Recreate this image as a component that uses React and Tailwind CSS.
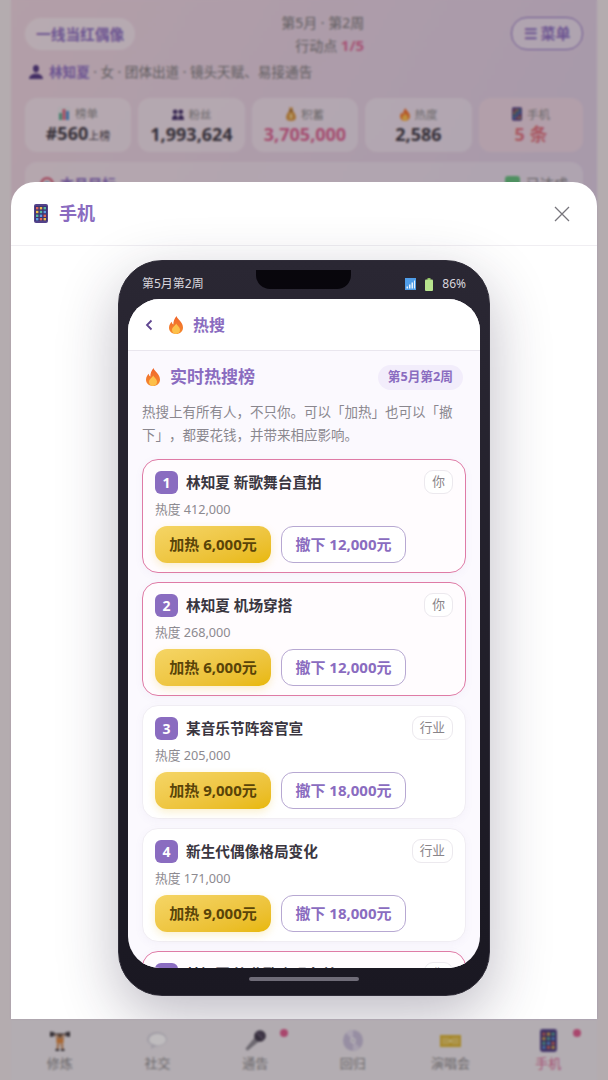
import React from 'react';

const Flame = ({ w = 14, h = 18 }) => (
  <svg width={w} height={h} viewBox="0 0 14 18" className="shrink-0">
    <defs>
      <linearGradient id="flameOuter" x1="0" y1="0" x2="0" y2="1">
        <stop offset="0" stopColor="#f0652a" />
        <stop offset="1" stopColor="#f58a2e" />
      </linearGradient>
    </defs>
    <path d="M7.500 0C8 3 14 6 14 11.500 14 15.500 11 18 7 18S0 15.500 0 11.800C0 9 1.500 7 2.800 5.800c.1 1.400.6 2.300 1.500 2.800C4.200 5.500 5.500 2.500 7.500 0z" fill="url(#flameOuter)" />
    <path d="M7.300 7.500c.4 1.800 3.700 3.400 3.700 6.300 0 2.300-1.700 4.200-4 4.200s-4-1.800-4-4c0-2.900 3.300-4.200 4.300-6.500z" fill="#fcc04a" />
  </svg>
);

const PhoneIcon = ({ w = 14, h = 19 }) => (
  <svg width={w} height={h} viewBox="0 0 14 19" className="shrink-0">
    <rect width="14" height="19" rx="2" fill="#53428a" />
    <rect x="1.200" y="2" width="11.600" height="15" fill="#3c3370" />
    {[2, 5.800, 9.600].map((x, i) =>
      [3, 6.800, 10.600, 14].map((y, j) => (
        <rect key={`${i}-${j}`} x={x} y={y} width="2.400" height="2.400" fill={['#e0685a', '#f0bc48', '#55b8a0', '#5a9be8'][(i + j) % 4]} />
      ))
    )}
  </svg>
);

const ChartIcon = () => (
  <svg width="12" height="13" viewBox="0 0 12 13" className="shrink-0">
    <rect width="12" height="13" fill="#e6e4e8" />
    <rect x="1" y="6" width="3" height="7" fill="#5aaa8c" />
    <rect x="4.500" y="2" width="3" height="11" fill="#d8607a" />
    <rect x="8" y="4" width="3" height="9" fill="#4f8fd0" />
  </svg>
);

const PeopleIcon = () => (
  <svg width="12" height="11" viewBox="0 0 12 11" fill="#3f2c66" className="shrink-0">
    <circle cx="3.200" cy="2.800" r="2.400" />
    <circle cx="8.800" cy="2.800" r="2.400" />
    <path d="M0 11c0-3.500 1.200-5 3.200-5S5.800 7.500 5.800 11zM6.200 11c0-3.500.6-5 2.600-5S12 7.500 12 11z" />
  </svg>
);

const BagIcon = () => (
  <svg width="10" height="14" viewBox="0 0 10 14" className="shrink-0">
    <path d="M3.500 3.500 3 0.500h4l-.5 3C8.500 5.500 10 8 10 10.500 10 13 8 14 5 14s-5-1-5-3.500C0 8 1.500 5.500 3.500 3.500z" fill="#d8973f" />
    <rect x="3.200" y="3" width="3.600" height="1.200" fill="#7a4f20" />
    <rect x="4" y="7" width="2" height="4.500" fill="#f6dc90" />
  </svg>
);

const PersonIcon = () => (
  <svg width="14" height="14" viewBox="0 0 14 14" fill="#4f3580" className="shrink-0">
    <path d="M7 0C5 0 4 1.500 4 3.500 4 5.500 5 7.500 7 7.500S10 5.500 10 3.500C10 1.500 9 0 7 0z" />
    <path d="M0 14c0-3 2.500-4.500 5-5.200h4C11.500 9.500 14 11 14 14z" />
  </svg>
);

const TargetIcon = () => (
  <svg width="14" height="14" viewBox="0 0 14 14" className="shrink-0">
    <circle cx="7" cy="7" r="7" fill="#d8607a" />
    <circle cx="7" cy="7" r="4.500" fill="#eee" />
    <circle cx="7" cy="7" r="2.300" fill="#4f8fd0" />
  </svg>
);

const Lifter = () => (
  <svg width="20" height="20" viewBox="0 0 20 20">
    <rect x="1" y="2.500" width="18" height="1.600" fill="#3d3a40" />
    <rect x="0" y="0.500" width="2.200" height="5.600" rx="1" fill="#2e2b30" />
    <rect x="2.600" y="0.800" width="1.600" height="5" rx="0.800" fill="#2e2b30" />
    <rect x="15.800" y="0.800" width="1.600" height="5" rx="0.800" fill="#2e2b30" />
    <rect x="17.800" y="0.500" width="2.200" height="5.600" rx="1" fill="#2e2b30" />
    <path d="M5 3l1 0 2 3h4l2-3 1 0-1.500 5-.5 3H7l-.5-3z" fill="#cb9060" />
    <circle cx="10" cy="4.600" r="2" fill="#6a4a30" />
    <rect x="6.500" y="8" width="7" height="4.500" fill="#e0883a" />
    <path d="M7 12.500h2.500L8.600 18H6.400zM10.500 12.500H13l.6 5.500h-2.200z" fill="#cb9060" />
    <rect x="5.500" y="18" width="3.600" height="2" fill="#3d3a40" />
    <rect x="10.900" y="18" width="3.600" height="2" fill="#3d3a40" />
  </svg>
);

const Bubble = () => (
  <svg width="20" height="17" viewBox="0 0 20 17">
    <ellipse cx="10" cy="7.200" rx="10" ry="7.200" fill="#d4d2dc" />
    <ellipse cx="10.500" cy="7.600" rx="8.500" ry="5.800" fill="#ffffff" />
    <path d="M4.500 11.500 4 17l6-3.200z" fill="#d4d2dc" />
  </svg>
);

const Mic = () => (
  <svg width="21" height="21" viewBox="0 0 21 21">
    <path d="M10 7l4.500 4L2.500 20.700 0.400 18.800z" fill="#8a8890" />
    <circle cx="15" cy="6" r="5.800" fill="#3b3546" />
    <path d="M11.500 2.500l7 7" stroke="#8f7f9c" strokeWidth="1" />
    <path d="M13.800 1.200l5.200 5.200" stroke="#6f6080" strokeWidth="1" />
  </svg>
);

const Disc = () => (
  <svg width="20" height="21" viewBox="0 0 20 21">
    <ellipse cx="10" cy="10.500" rx="10" ry="10.500" fill="#c6bed8" />
    <path d="M10 10.500 3 3A10 10 0 0 1 10 0z" fill="#e2dcec" />
    <path d="M10 10.500 17 18a10 10 0 0 1-7 3z" fill="#ddd7e8" />
    <ellipse cx="10" cy="10.500" rx="2.600" ry="2.800" fill="#f4f2f7" />
    <ellipse cx="10" cy="10.500" rx="1" ry="1.100" fill="#a9a2b6" />
  </svg>
);

const Ticket = () => (
  <svg width="21" height="12" viewBox="0 0 21 12">
    <rect width="21" height="12" fill="#dcb52f" />
    <rect x="2" y="2.500" width="7" height="7" fill="#e6c85c" />
    <rect x="12" y="2.500" width="7" height="7" fill="#e6c85c" />
    <circle cx="10.500" cy="6" r="1.800" fill="#f4e290" />
  </svg>
);

const stats = [
  { label: '榜单', Icon: ChartIcon, value: '#560', sub: '上榜', width: 'w-[106px]' },
  { label: '粉丝', Icon: PeopleIcon, value: '1,993,624', width: 'w-[107px]' },
  { label: '积蓄', Icon: BagIcon, value: '3,705,000', width: 'w-[106px]', pink: true },
  { label: '热度', Icon: () => <Flame w={10} h={13} />, value: '2,586', width: 'w-[107px]' },
  { label: '手机', Icon: () => <PhoneIcon w={10} h={14} />, value: '5 条', width: 'flex-1', alert: true },
];

const news = [
  { n: 1, title: '林知夏 新歌舞台直拍', tag: '你', heat: '412,000', up: '6,000', down: '12,000', mine: true },
  { n: 2, title: '林知夏 机场穿搭', tag: '你', heat: '268,000', up: '6,000', down: '12,000', mine: true },
  { n: 3, title: '某音乐节阵容官宣', tag: '行业', heat: '205,000', up: '9,000', down: '18,000' },
  { n: 4, title: '新生代偶像格局变化', tag: '行业', heat: '171,000', up: '9,000', down: '18,000' },
  { n: 5, title: '林知夏 毕业歌合唱名单', tag: '你', heat: '120,000', up: '6,000', down: '12,000', mine: true },
];

const navItems = [
  { label: '修炼', icon: <Lifter /> },
  { label: '社交', icon: <Bubble /> },
  { label: '通告', icon: <Mic />, dot: true },
  { label: '回归', icon: <Disc /> },
  { label: '演唱会', icon: <Ticket /> },
  { label: '手机', icon: <PhoneIcon w={17} h={23} />, dot: true, active: true },
];

function NewsCard({ item }) {
  return (
    <div className={`rounded-[16px] px-[12px] pt-[10px] pb-[9px] shadow-[0_2px_8px_rgba(120,90,170,0.05)] border-[1.5px] ${item.mine ? 'border-[#df7ba6] bg-[#fffcfe]' : 'border-[#f0edf3] bg-white'}`}>
      <div className="flex items-center gap-[8px] h-[24px]">
        <span className="flex items-center justify-center w-[23px] h-[23px] rounded-[6px] bg-[#8a6cc0] text-white text-[14px] font-bold">{item.n}</span>
        <span className="flex-1 text-[14.67px] leading-[23px] font-bold text-[#3a3640]">{item.title}</span>
        <span className="flex items-center justify-center h-[24px] min-w-[28px] px-[7px] rounded-[9px] bg-white border border-[#ece9ee] text-[12.7px] text-[#888488]">{item.tag}</span>
      </div>
      <div className="mt-[5px] text-[12.7px] leading-[20px] text-[#8d8a90]">热度 {item.heat}</div>
      <div className="mt-[7px] flex gap-[10px]">
        <button className="h-[37px] w-[116px] rounded-[12px] bg-gradient-to-br from-[#f5d565] to-[#e8b800] text-[15px] font-bold text-[#5a4408] shadow-[0_3px_8px_rgba(230,180,0,0.2)]">加热 {item.up}元</button>
        <button className="h-[37px] w-[125px] rounded-[12px] bg-white border-[1.5px] border-[#b7a8d2] text-[15px] font-bold text-[#8a6cc0]">撤下 {item.down}元</button>
      </div>
    </div>
  );
}

export default function App() {
  return (
    <div className="relative w-[608px] h-[1080px] overflow-hidden bg-[#efe8ea] font-['Noto_Sans','Noto_Sans_CJK_SC',sans-serif] [text-spacing-trim:space-all]">
      {/* game screen behind the dialog */}
      <div className="mx-auto flex h-full w-[586px] flex-col bg-gradient-to-br from-[#eed6e0] via-[#e0cfe3] to-[#d4c8e8]">
        <div className="flex-1 overflow-hidden px-[14px] pt-[17px]">
          <div className="flex items-start justify-between h-[33px]">
            <span className="mt-[1px] flex items-center h-[32px] px-[11px] rounded-full bg-white/40 text-[14.7px] font-bold text-[#8a6cc0]">一线当红偶像</span>
            <div className="ml-[146px] text-right text-[14px] leading-[23px] text-[#777] -mt-[6px]">
              <div>第5月 · 第2周</div>
              <div>行动点 <b className="text-[15px] text-[#dc6a97]">1/5</b></div>
            </div>
            <button className="ml-auto h-[33px] w-[72px] rounded-[16px] border-[1.5px] border-[#8a6cc0] bg-white/30 text-[15px] font-bold text-[#8a6cc0]">☰ 菜单</button>
          </div>
          <div className="mt-[11px] flex items-center gap-[6px] text-[13.6px] leading-[22px] text-[#777] pl-[4px]">
            <PersonIcon />
            <span><b className="text-[#8a6cc0]">林知夏</b> · 女 · 团体出道 · 镜头天赋、易接通告</span>
          </div>
          <div className="mt-[15px] flex gap-[7px]">
            {stats.map((s) => (
              <div key={s.label} className={`${s.width} h-[54px] pt-[1px] rounded-[12px] flex flex-col items-center justify-center ${s.alert ? 'bg-[#f9dde2]/50' : 'bg-white/35'}`}>
                <div className="flex items-center gap-[5px] text-[11.5px] leading-[17px] text-[#888]">
                  <s.Icon />
                  {s.label}
                </div>
                <div className={`text-[18px] leading-[23px] font-bold ${s.pink ? 'text-[#d9608f]' : s.alert ? 'text-[#e0707c]' : 'text-[#3a3640]'}`}>
                  {s.value}
                  {s.sub && <span className="text-[11px] font-normal">{s.sub}</span>}
                </div>
              </div>
            ))}
          </div>
          <div className="mt-[10px] flex h-[60px] items-start justify-between rounded-[12px] bg-white/30 px-[15px] pt-[11px] text-[14px] text-[#777]">
            <span className="flex items-center gap-[6px] font-bold text-[#8a6cc0]">
              <TargetIcon />
              本月目标
            </span>
            <span className="flex items-center gap-[6px]">
              <span className="h-[15px] w-[15px] rounded-[3px] bg-[#5fc07a]" />
              已达成
            </span>
          </div>
        </div>
        <div className="grid h-[61px] grid-cols-6 bg-[#eeeaee]">
          {navItems.map((item) => (
            <div key={item.label} className="relative flex flex-col items-center pt-[9px]">
              <div className="flex h-[25px] items-center justify-center">{item.icon}</div>
              <span className={`text-[13px] leading-[20px] ${item.active ? 'text-[#dc6a97]' : 'text-[#888]'}`}>{item.label}</span>
              {item.dot && <span className="absolute right-[16px] top-[10px] h-[8px] w-[8px] rounded-full bg-[#e0588c]" />}
            </div>
          ))}
        </div>
      </div>

      {/* dim overlay */}
      <div className="absolute inset-0 bg-[#2a2028]/30 backdrop-blur-[1px]" />

      {/* phone dialog */}
      <div className="absolute left-[11px] right-[11px] top-[182px] bottom-[61px] flex flex-col overflow-hidden rounded-t-[24px] bg-white">
        <div className="flex h-[64px] shrink-0 items-center justify-between border-b border-[#f0eef2] pl-[23px] pr-[27px]">
          <div className="flex items-center gap-[11px] text-[18px] font-bold text-[#8a6cc0]">
            <PhoneIcon />
            手机
          </div>
          <svg width="16" height="16" viewBox="0 0 16 16" stroke="#77757c" strokeWidth="1.300">
            <path d="M1 1l14 14M15 1L1 15" />
          </svg>
        </div>
        <div className="flex flex-1 justify-center pt-[14px]">
          <div className="flex h-[736px] w-[372px] flex-col rounded-[44px] border border-[#2f2c38] bg-gradient-to-b from-[#2a2733] to-[#1a1822] px-[9px] shadow-[0_20px_60px_rgba(40,30,60,0.3)]">
            <div className="relative flex h-[38px] shrink-0 items-center justify-between px-[14px] pt-[8px] text-[12px] text-[#d8d6dd]">
              <span>第5月第2周</span>
              <div className="absolute left-[128px] top-[9px] h-[19px] w-[95px] rounded-b-[14px] bg-[#08060c]" />
              <div className="flex items-center gap-[9px]">
                <svg width="11" height="12" viewBox="0 0 11 12">
                  <rect width="11" height="12" fill="#4f9de8" />
                  <path d="M1.500 10.500h1.500V8.500H1.500zM4 10.500h1.500V6.500H4zM6.500 10.500H8V4.500H6.500zM9 10.500h1V2.500H9z" fill="#e8f2fc" />
                </svg>
                <svg width="8" height="13" viewBox="0 0 8 13">
                  <rect x="2.500" width="3" height="2" fill="#8fc060" />
                  <rect y="1.500" width="8" height="11.500" rx="1" fill="#b8e48e" />
                </svg>
                <span>86%</span>
              </div>
            </div>
            <div className="flex h-[669px] shrink-0 flex-col overflow-hidden rounded-[32px] bg-[#fbf9fe]">
              <div className="flex h-[52px] shrink-0 items-center border-b border-[#e9e6ee] bg-white pl-[17px]">
                <svg width="8" height="12" viewBox="0 0 8 12" fill="none" stroke="#5f4590" strokeWidth="1.800">
                  <path d="M6.500 1.500 2 6l4.500 4.500" />
                </svg>
                <span className="ml-[16px]"><Flame /></span>
                <span className="ml-[10px] text-[16px] font-bold text-[#8a6cc0]">热搜</span>
              </div>
              <div className="px-[14px] pt-[13px]">
                <div className="flex h-[26px] items-center justify-between">
                  <div className="flex items-center gap-[10px] text-[17px] font-bold text-[#8a6cc0] pl-[4px]">
                    <Flame />
                    实时热搜榜
                  </div>
                  <span className="mr-[3px] flex h-[25px] items-center rounded-full bg-[#f2edfb] px-[10px] text-[12.7px] font-bold text-[#8a6cc0]">第5月第2周</span>
                </div>
                <p className="mt-[11px] text-[13.5px] leading-[23px] text-[#8a878e]">热搜上有所有人，不只你。可以「加热」也可以「撤下」，都要花钱，并带来相应影响。</p>
                <div className="mt-[12px] flex flex-col gap-[9px]">
                  {news.map((item) => (
                    <NewsCard key={item.n} item={item} />
                  ))}
                </div>
              </div>
            </div>
            <div className="flex flex-1 items-center justify-center pb-[6px]">
              <div className="h-[4px] w-[110px] rounded-full bg-[#6f6c78]" />
            </div>
          </div>
        </div>
      </div>
    </div>
  );
}
